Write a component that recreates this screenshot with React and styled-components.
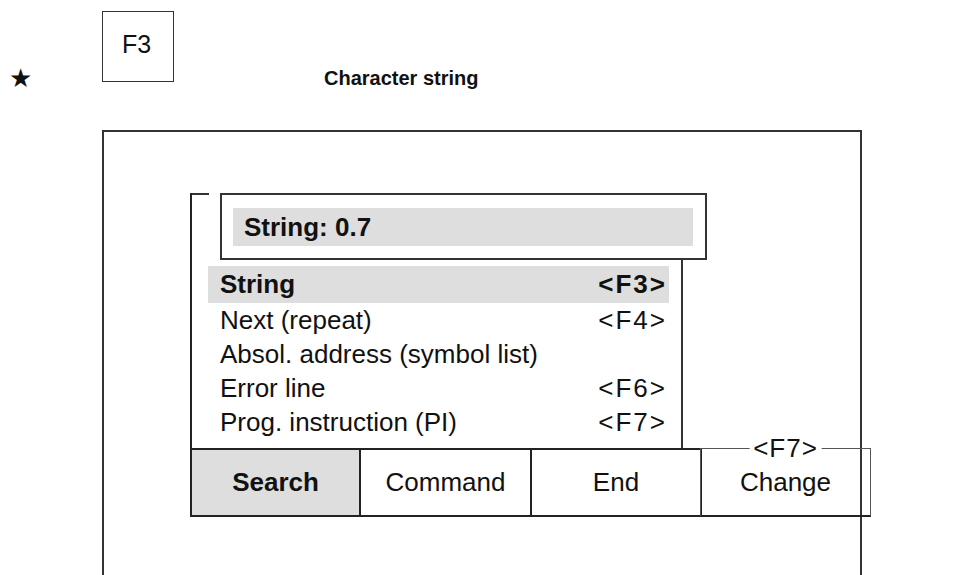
import React from 'react';
import styled, { createGlobalStyle } from 'styled-components';

const menuItems = [
  { label: 'String', key: '<F3>', active: true },
  { label: 'Next (repeat)', key: '<F4>' },
  { label: 'Absol. address (symbol list)', key: '' },
  { label: 'Error line', key: '<F6>' },
  { label: 'Prog. instruction (PI)', key: '<F7>' },
];

const buttons = [
  { label: 'Search', width: 171, active: true },
  { label: 'Command', width: 173 },
  { label: 'End', width: 172 },
];

const App = () => {
  return (
    <Page>
      <GlobalStyle />
      <Header>
        <Star>★</Star>
        <KeyBox>F3</KeyBox>
        <Title>Character string</Title>
      </Header>

      <Frame>
        <MenuGroup>
          <Panel>
            <PanelHead>
              <Corner />
              <StringBox>
                <StringField>String: 0.7</StringField>
              </StringBox>
            </PanelHead>
            <MenuList>
              {menuItems.map((item) => (
                <MenuRow key={item.label} $active={item.active}>
                  <span>{item.label}</span>
                  <KeyHint>{item.key}</KeyHint>
                </MenuRow>
              ))}
            </MenuList>
          </Panel>

          <ButtonBar>
            {buttons.map((b) => (
              <SoftKey key={b.label} $w={b.width} $active={b.active}>
                {b.label}
              </SoftKey>
            ))}
            <ChangeKey>
              <ChangeLabel>{'<F7>'}</ChangeLabel>
              Change
            </ChangeKey>
          </ButtonBar>
        </MenuGroup>
      </Frame>
    </Page>
  );
};

export default App;

const GlobalStyle = createGlobalStyle`
  body {
    margin: 0;
    background: #fff;
    overflow: hidden;
    font-family: "Liberation Sans", Arial, sans-serif;
    color: #111;
  }
`;

const Page = styled.div`
  width: 961px;
  height: 575px;
  overflow: hidden;
`;

const Header = styled.div`
  height: 130px;
  display: flex;
  align-items: flex-start;
  padding-left: 9px;
  box-sizing: border-box;
`;

const Star = styled.div`
  width: 93px;
  margin-top: 63px;
  font-family: "DejaVu Sans", sans-serif;
  font-size: 26px;
  line-height: 30px;
`;

const KeyBox = styled.div`
  margin-top: 11px;
  width: 72px;
  height: 71px;
  box-sizing: border-box;
  border: 1.5px solid #333;
  padding: 18px 0 0 19px;
  font-size: 25px;
  line-height: 28px;
`;

const Title = styled.div`
  margin: 66px 0 0 150px;
  font-size: 20px;
  font-weight: bold;
  line-height: 24px;
`;

const Frame = styled.div`
  margin-left: 102px;
  width: 760px;
  height: 460px;
  box-sizing: border-box;
  border: 2px solid #333;
  border-bottom: none;
  padding: 61px 0 0 86px;
`;

const MenuGroup = styled.div`
  display: flex;
  flex-direction: column;
  width: 681px;
`;

const Panel = styled.div`
  width: 493px;
  box-sizing: border-box;
  border-left: 2px solid #222;
`;

const PanelHead = styled.div`
  display: flex;
  align-items: flex-start;
`;

const Corner = styled.div`
  width: 17px;
  border-top: 2px solid #333;
  flex-shrink: 0;
`;

const StringBox = styled.div`
  margin-left: 11px;
  width: 487px;
  height: 67px;
  flex-shrink: 0;
  box-sizing: border-box;
  border: 2px solid #333;
  padding: 13px 12px 0 11px;
`;

const StringField = styled.div`
  height: 38px;
  background: #dedede;
  display: flex;
  align-items: center;
  padding-left: 11px;
  font-size: 26px;
  font-weight: bold;
`;

const MenuList = styled.div`
  border-right: 2px solid #333;
  padding: 6px 12px 9px 16px;
`;

const MenuRow = styled.div`
  height: ${(p) => (p.$active ? '37px' : '34px')};
  display: flex;
  align-items: center;
  justify-content: space-between;
  padding: 0 2px 0 12px;
  font-size: 26px;
  font-weight: ${(p) => (p.$active ? 'bold' : 'normal')};
  background: ${(p) => (p.$active ? '#dedede' : 'transparent')};
`;

const KeyHint = styled.span`
  letter-spacing: 2px;
`;

const ButtonBar = styled.div`
  display: flex;
`;

const SoftKey = styled.div`
  width: ${(p) => p.$w}px;
  height: 69px;
  box-sizing: border-box;
  margin-left: -2px;
  border: 2px solid #222;
  background: ${(p) => (p.$active ? '#dedede' : '#fff')};
  display: flex;
  align-items: center;
  justify-content: center;
  font-size: 26px;
  font-weight: ${(p) => (p.$active ? 'bold' : 'normal')};

  &:first-child {
    margin-left: 0;
  }
`;

const ChangeKey = styled.div`
  position: relative;
  width: 171px;
  height: 69px;
  box-sizing: border-box;
  margin-left: -2px;
  border: 1.5px solid #555;
  border-bottom: 2px solid #222;
  display: flex;
  align-items: center;
  justify-content: center;
  font-size: 26px;
`;

const ChangeLabel = styled.span`
  position: absolute;
  top: -15px;
  left: 50%;
  transform: translateX(-50%);
  background: #fff;
  padding: 0 4px;
  line-height: 28px;
  letter-spacing: 1px;
`;
